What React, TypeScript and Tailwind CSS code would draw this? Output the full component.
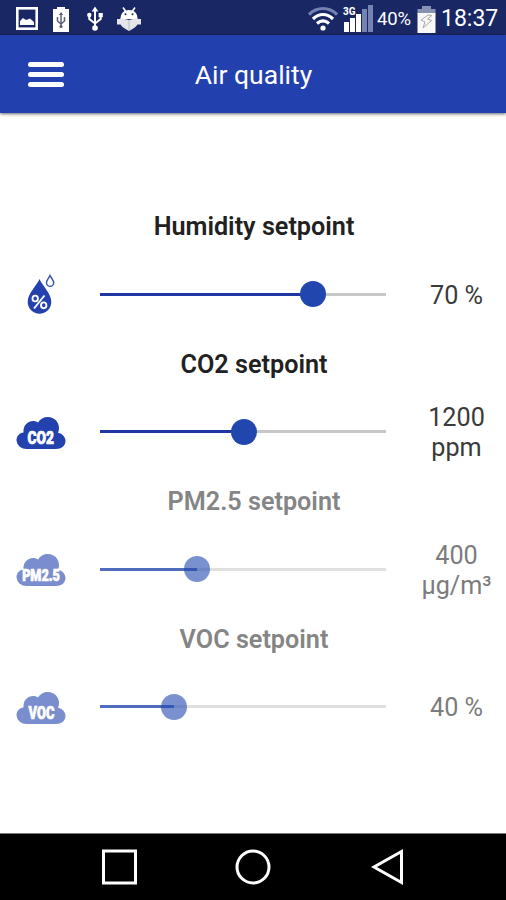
import React from 'react';

interface Setpoint {
  id: string;
  title: string;
  badge: string;
  value: string[];
  // thumb position, percent of the track
  position: number;
  disabled?: boolean;
}

const SETPOINTS: Setpoint[] = [
  { id: 'humidity', title: 'Humidity setpoint', badge: '%', value: ['70 %'], position: 74.6 },
  { id: 'co2', title: 'CO2 setpoint', badge: 'CO2', value: ['1200', 'ppm'], position: 50.4 },
  { id: 'pm25', title: 'PM2.5 setpoint', badge: 'PM2.5', value: ['400', 'µg/m³'], position: 33.9, disabled: true },
  { id: 'voc', title: 'VOC setpoint', badge: 'VOC', value: ['40 %'], position: 25.9, disabled: true },
];

// condensed lettering: horizontal squeeze per label
const BADGE_SCALE: Record<string, string> = {
  CO2: 'translate(24.700 27.800) scale(0.81 1.06)',
  'PM2.5': 'translate(25 27.800) scale(0.79 1.06)',
  VOC: 'translate(25.500 27.800) scale(0.76 1.06)',
};

function DropIcon() {
  return (
    <svg width="50" height="46" viewBox="0 0 50 46">
      <path d="M23.500 7C20.500 14 11.700 21.500 11.700 30a11.800 11.700 0 0 0 23.600 0C35.300 21.500 26.500 14 23.500 7Z" fill="#2342ae" />
      <path d="M34 3.500C33 6 30.500 8 30.500 10.800a3.600 3.600 0 0 0 7.200 0C37.700 8 35 6 34 3.500Z" fill="none" stroke="#3350b4" strokeWidth="1.400" />
      <g fill="none" stroke="#fff" strokeWidth="1.900">
        <ellipse cx="19.200" cy="26.500" rx="2.700" ry="2.900" />
        <ellipse cx="27.700" cy="33.300" rx="2.700" ry="2.900" />
        <path d="M28.500 23.500L18 36.500" />
      </g>
    </svg>
  );
}

function CloudIcon({ label }: { label: string }) {
  return (
    <svg className="-ml-[0.500px] overflow-visible" width="50" height="34" viewBox="0 0 50 34">
      <path
        d="M11 33A10 9 0 0 1 .5 24.500C.5 20 3.500 17 7.500 16.500C7 9 12 5 17 5C19 5 20.500 5.500 22 6.500C24 3 27.500 1 32 1C38.500 1 43 6 43 12C43 14 42.700 15 42 16.700C46.500 17.500 49.500 21 49.500 25C49.500 30 45 33 40 33Z"
        fill="#2342ae"
      />
      <text
        transform={BADGE_SCALE[label]}
        textAnchor="middle"
        fill="#fff"
        stroke="#fff"
        strokeWidth="0.700"
        fontSize={label === 'PM2.5' ? 16 : 17}
        fontWeight="900"
      >
        {label}
      </text>
    </svg>
  );
}

function StatusBar() {
  return (
    <div className="flex h-[35px] items-center justify-between bg-[#192764] pt-0.5 pr-[9px] pl-4 text-white">
      <div className="flex items-center">
        <svg width="22" height="23" viewBox="0 0 22 23">
          <rect x="1.300" y="1.300" width="19.400" height="20.400" fill="none" stroke="#fff" strokeWidth="2.600" />
          <path d="M4 18V14L7 11L10 13L14 11.500L18 15V18Z" fill="#fff" />
        </svg>
        <svg className="ml-[15px]" width="16" height="26" viewBox="0 0 16 26">
          <path d="M4 1h8v2h4v23H0V3h4Z" fill="#fff" />
          <path d="M8 7v14M4.500 11v4L8 18L11.500 15V11" fill="none" stroke="#596078" strokeWidth="1.500" />
          <path d="M5.800 9L8 6L10.200 9Z" fill="#596078" />
          <circle cx="8" cy="20.500" r="1.600" fill="#596078" />
        </svg>
        <svg className="ml-[18px]" width="16" height="25" viewBox="0 0 16 25">
          <path d="M8 4v18M2.300 8v5L8 17.500L13.700 13V8" fill="none" stroke="#fff" strokeWidth="2" />
          <path d="M4.700 5.500L8 .5L11.300 5.500Z" fill="#fff" />
          <circle cx="8" cy="22" r="2.800" fill="#fff" />
          <circle cx="2.300" cy="9" r="2.200" fill="#fff" />
          <path d="M11.600 7h4.200v4.200h-4.200Z" fill="#fff" />
        </svg>
        <svg className="ml-[13px]" width="26" height="26" viewBox="0 0 26 26">
          <path d="M7 1.500L9.500 5M19 1.500L16.500 5" stroke="#fff" strokeWidth="1.600" />
          <path d="M4.500 13C4.500 7 8 4 13 4S21.500 7 21.500 13Z" fill="#fff" />
          <circle cx="9.500" cy="8.300" r="1" fill="#192764" />
          <circle cx="16.500" cy="8.300" r="1" fill="#192764" />
          <path d="M1 13H5V18.500H1ZM21 13H25V18.500H21Z" fill="#e3e5e9" />
          <path d="M4.500 12L13 14L21.500 12V18Q21 21 13 25Q5 21 4.500 18Z" fill="#e3e5e9" />
          <path d="M13 14V24" stroke="#b8bdcb" />
        </svg>
      </div>

      <div className="flex items-center">
        <svg width="30" height="25" viewBox="0 0 30 25">
          <path d="M1 8.500C9 .5 21 .5 29 8.500" fill="none" stroke="#7583b3" strokeWidth="3.200" />
          <path d="M5 13C11 7 19 7 25 13M9 17.500C13 14 17 14 21 17.500" fill="none" stroke="#fff" strokeWidth="3.200" />
          <circle cx="15" cy="22" r="2.600" fill="#fff" />
        </svg>
        <svg className="ml-[5px]" width="31" height="29" viewBox="0 0 31 29">
          <path d="M1 18H6V28H1ZM7 14H12V28H7ZM13 10H18V28H13Z" fill="#fff" />
          <path d="M19 5H24V28H19ZM25 1H30V28H25Z" fill="#7583b3" />
          <text x="0" y="10.500" fontSize="11" fontWeight="800" fill="#fff" textLength="12.500" lengthAdjust="spacingAndGlyphs">3G</text>
        </svg>
        <span className="ml-[3px] w-[34px] pt-px text-[18.500px] leading-none tracking-[-0.2px]">40%</span>
        <svg className="ml-[6px]" width="19" height="28" viewBox="0 0 19 28">
          <path d="M5 1H14V4H18.500V9H.5V4H5Z" fill="#8791b3" />
          <path d="M.5 8H18.500V28H.5Z" fill="#f8f8f8" />
          <path d="M11 10L4 15L8 17L6 23L14.500 15.500L10.500 14L15 10.500Z" fill="none" stroke="#a9a9a9" />
        </svg>
        <span className="ml-[5px] w-[56px] text-[23px] leading-none whitespace-nowrap">18:37</span>
      </div>
    </div>
  );
}

function Slider({ position, disabled }: { position: number; disabled?: boolean }) {
  return (
    <div className="relative flex h-[26px] w-[286px] items-center">
      <div className={`h-[3px] w-full ${disabled ? 'bg-[#e0e0e0]' : 'bg-[#c7c7c7]'}`}>
        <div className={`h-full ${disabled ? 'bg-[#506dbd]' : 'bg-[#2037a3]'}`} style={{ width: `${position}%` }} />
      </div>
      <div
        className={`absolute size-[26px] -translate-x-1/2 rounded-full bg-[#2147af] ${disabled ? 'opacity-60' : ''}`}
        style={{ left: `${position}%` }}
      />
    </div>
  );
}

function SetpointRow({ item }: { item: Setpoint }) {
  const { title, badge, value, position, disabled } = item;
  return (
    <section className="h-[137.500px]">
      <h2 className={`h-[30px] pt-px pl-[2px] text-center text-[25.200px] leading-[30px] font-semibold ${disabled ? 'text-[#858585]' : 'text-[#212121]'}`}>
        {title}
      </h2>
      <div className="flex h-[106px] items-center pl-4">
        <div className={`w-[84px] pt-[2px] ${disabled ? 'opacity-60' : ''}`}>
          {badge === '%' ? <DropIcon /> : <CloudIcon label={badge} />}
        </div>
        <Slider position={position} disabled={disabled} />
        <div className={`ml-[30px] w-[81px] pt-[3px] text-center text-[25.200px] leading-[30px] ${disabled ? 'text-[#7c7c7c]' : 'text-[#3a3a3a]'}`}>
          {value.map((line) => (
            <div key={line}>{line}</div>
          ))}
        </div>
      </div>
    </section>
  );
}

export default function App() {
  return (
    <div className="flex h-[900px] w-[506px] flex-col overflow-hidden bg-white font-['Roboto',sans-serif]">
      <StatusBar />
      <header className="z-10 grid h-[78px] shrink-0 grid-cols-[1fr_auto_1fr] items-center bg-[#2341ae] shadow-[0_1px_3px_rgba(0,0,0,0.6)]">
        <button className="ml-7 flex w-9 flex-col gap-[5px] pt-px" aria-label="Menu">
          <span className="h-[5px] rounded-full bg-white" />
          <span className="h-[5px] rounded-full bg-white" />
          <span className="h-[5px] rounded-full bg-white" />
        </button>
        <h1 className="pt-[2px] pl-px text-[26.500px] leading-8 text-white">Air quality</h1>
      </header>
      <main className="flex-1 pt-[98px]">
        {SETPOINTS.map((item) => (
          <SetpointRow key={item.id} item={item} />
        ))}
      </main>
      <nav className="h-[67px] shrink-0 border-t border-[#777] bg-black">
        <svg width="506" height="66" viewBox="0 0 506 66" fill="none" stroke="#fff" strokeWidth="3">
          <rect x="103.500" y="17" width="32" height="32" />
          <circle cx="253" cy="33" r="16" />
          <path d="M401.500 17.500V48.500L374 33Z" />
        </svg>
      </nav>
    </div>
  );
}
